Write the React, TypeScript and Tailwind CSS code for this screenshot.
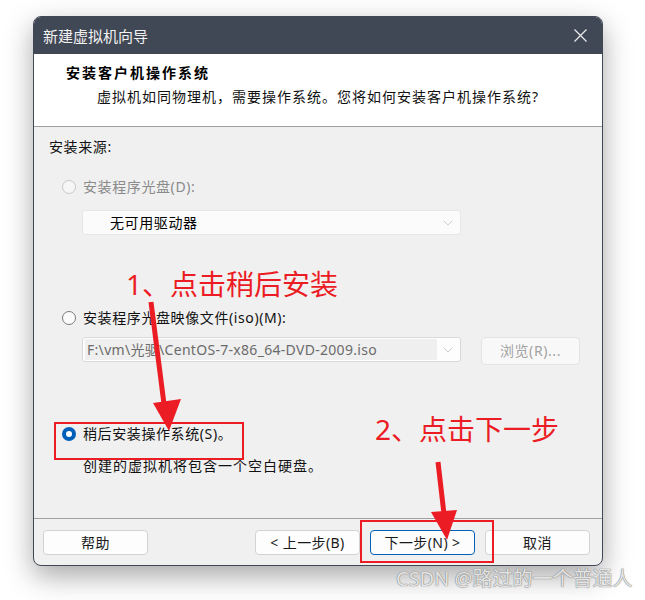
import { ChevronDown } from "lucide-react";

const ui = "font-['Noto_Sans','Noto_Sans_CJK_SC',sans-serif]";

/** Windows 11 style radio dot: off, greyed out, or picked. */
function Radio({ state }: { state: "off" | "disabled" | "on" }) {
  if (state === "on") {
    return (
      <span className="flex size-[14px] shrink-0 items-center justify-center rounded-full bg-[#005fb8]">
        <span className="size-[6px] rounded-full bg-white" />
      </span>
    );
  }
  return (
    <span
      className={
        state === "disabled"
          ? "size-[14px] shrink-0 rounded-full border border-[#c9c9c9] bg-[#f6f6f6]"
          : "size-[14px] shrink-0 rounded-full border border-[#7a7a7a] bg-[#fbfbfb]"
      }
    />
  );
}

function Btn({ label, primary }: { label: string; primary?: boolean }) {
  return (
    <button
      type="button"
      className={
        "flex h-[25px] w-[105px] items-center justify-center rounded-[4px] bg-[#fdfdfd] text-[14px] tracking-[0.4px] text-[#1a1a1a] " +
        (primary ? "border border-[#005fb8]" : "border border-[#d3d3d3]")
      }
    >
      {label}
    </button>
  );
}

export default function App() {
  return (
    <div className={`relative h-[600px] w-[645px] overflow-hidden bg-white pl-[33px] pt-[16px] ${ui}`}>
      {/* wizard window */}
      <div className="flex h-[550px] w-[570px] flex-col overflow-hidden rounded-[8px] border border-[#404755] bg-[#f0f0f0] shadow-[0_10px_28px_rgba(0,0,0,0.35)]">
        <div className="flex h-[37px] shrink-0 items-center justify-between bg-[#404755] pl-[9px] pr-[15px]">
          <span className="text-[15px] leading-[20px] text-[#f2f2f2]">新建虚拟机向导</span>
          <svg width="13" height="13" viewBox="0 0 13 13" aria-hidden>
            <path d="M0.5 0.5L12.5 12.5M12.5 0.5L0.5 12.5" stroke="#e8e8e8" strokeWidth="1.3" />
          </svg>
        </div>

        <div className="h-[72px] shrink-0 bg-white pl-[32px] pt-[9px]">
          <div className="text-[14px] font-bold leading-[20px] tracking-[2px] text-black">安装客户机操作系统</div>
          <div className="mt-[4px] pl-[31px] text-[14px] leading-[20px] tracking-[1px] text-[#111]">
            虚拟机如同物理机，需要操作系统。您将如何安装客户机操作系统?
          </div>
        </div>
        <div className="h-px shrink-0 bg-[#a0a0a0]" />

        <div className="flex h-[391px] shrink-0 flex-col pl-[15px] pt-[10px] text-[14px] leading-[20px] tracking-[0.6px] text-[#111]">
          <div>安装来源:</div>

          <div className="mt-[20px] flex items-center gap-[7px] pl-[13px] text-[#8a8a8a]">
            <Radio state="disabled" />
            <span>安装程序光盘(D):</span>
          </div>
          <div className="ml-[33px] mt-[13px] flex h-[25px] w-[379px] items-center justify-between rounded-[3px] border border-[#e6e6e6] bg-[#fbfbfb] pl-[27px] pr-[4px]">
            <span className="text-black">无可用驱动器</span>
            <ChevronDown size={16} strokeWidth={1} color="#b5b5b5" />
          </div>

          <div className="mt-[73px] flex items-center gap-[7px] pl-[13px]">
            <Radio state="off" />
            <span>安装程序光盘映像文件(iso)(M):</span>
          </div>
          <div className="ml-[33px] mt-[9px] flex items-start gap-[20px]">
            <div className="flex h-[25px] w-[379px] items-center justify-between rounded-[3px] border border-[#d9d9d9] bg-[#fdfdfd] pl-[2px] pr-[4px]">
              <span className="flex h-[21px] w-[352px] items-center bg-[#efefef] pl-[2px] tracking-[0.3px] text-[#6b6b6b]">
                F:\vm\光驱\CentOS-7-x86_64-DVD-2009.iso
              </span>
              <ChevronDown size={16} strokeWidth={1} color="#b5b5b5" />
            </div>
            <div className="flex h-[28px] w-[99px] items-center justify-center rounded-[4px] border border-[#e3e3e3] bg-[#f8f8f8] text-[#a3a3a3]">
              浏览(R)...
            </div>
          </div>

          <div className="mt-[59px] flex items-center gap-[7px] pl-[13px]">
            <Radio state="on" />
            <span>稍后安装操作系统(S)。</span>
          </div>
          <div className="mt-[12px] pl-[34px] tracking-[1px]">创建的虚拟机将包含一个空白硬盘。</div>
        </div>
        <div className="h-px shrink-0 bg-[#a0a0a0]" />

        <div className="flex flex-1 items-start justify-between pl-[9px] pr-[12px] pt-[11px]">
          <Btn label="帮助" />
          <div className="flex gap-[10px]">
            <Btn label="< 上一步(B)" />
            <Btn label="下一步(N) >" primary />
            <Btn label="取消" />
          </div>
        </div>
      </div>

      {/* red annotations */}
      <div className="absolute left-[126px] top-[270px] text-[28px] leading-[28px] text-[#ec1c24]">1、点击稍后安装</div>
      <div className="absolute left-[375px] top-[415px] text-[28px] leading-[28px] text-[#ec1c24]">2、点击下一步</div>
      <div className="absolute left-[54px] top-[422px] h-[38px] w-[190px] border-2 border-[#ec1c24]" />
      <div className="absolute left-[360px] top-[520px] h-[43px] w-[134px] border-2 border-[#ec1c24]" />
      <svg className="pointer-events-none absolute left-0 top-0" width="645" height="600" aria-hidden>
        <path d="M151 302L164 404" stroke="#ec1c24" strokeWidth="5" />
        <path d="M153 403L181 399L169 431Z" fill="#ec1c24" />
        <path d="M438 462L444 514" stroke="#ec1c24" strokeWidth="5" />
        <path d="M431 512L457 510L447 540Z" fill="#ec1c24" />
      </svg>

      <div className="absolute left-[396px] top-[566px] text-[20px] leading-[26px] text-[#e4e4e4] [text-shadow:0_0_1px_#7a7a7a,0_0_1px_#7a7a7a]">
        CSDN @路过的一个普通人
      </div>
    </div>
  );
}
